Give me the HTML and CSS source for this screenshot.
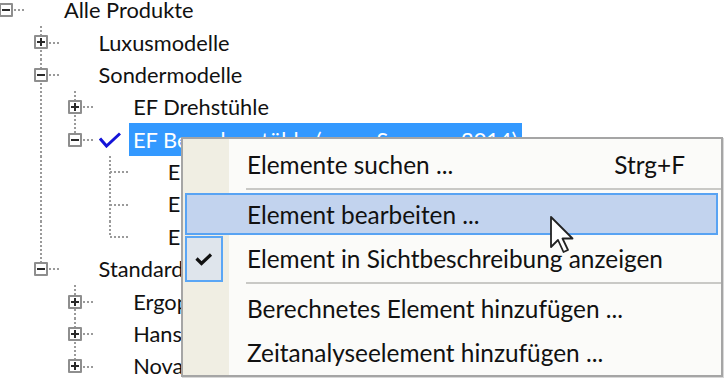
FILE: index.html
```html
<!DOCTYPE html>
<html lang="de">
<head>
<meta charset="utf-8">
<title>Produktbaum</title>
<link rel="stylesheet" href="styles.css">
</head>
<body>
<div class="tree">
  <div class="row">
    <span class="cell c-root"><span class="box minus"></span></span>
    <span class="cell icon"></span>
    <span class="label">Alle Produkte</span>
  </div>
  <div class="row">
    <span class="cell"></span>
    <span class="cell c-tee"><span class="box plus"></span></span>
    <span class="cell icon"></span>
    <span class="label">Luxusmodelle</span>
  </div>
  <div class="row">
    <span class="cell"></span>
    <span class="cell c-tee"><span class="box minus"></span></span>
    <span class="cell icon"></span>
    <span class="label">Sondermodelle</span>
  </div>
  <div class="row">
    <span class="cell"></span>
    <span class="cell g-line"></span>
    <span class="cell c-tee"><span class="box plus"></span></span>
    <span class="cell icon"></span>
    <span class="label">EF Drehstühle</span>
  </div>
  <div class="row">
    <span class="cell"></span>
    <span class="cell g-line"></span>
    <span class="cell c-elbow"><span class="box minus"></span></span>
    <span class="cell icon">
      <svg class="tick" width="22" height="16" viewBox="0 0 22 16"><path d="M1 6.5 L7.5 14 L21 1.5" fill="none" stroke="#1414d8" stroke-width="3" stroke-linejoin="miter"/></svg>
    </span>
    <span class="label selected">EF Besucherstühle (neu - Sommer 2014)</span>
  </div>
  <div class="row">
    <span class="cell"></span>
    <span class="cell g-line"></span>
    <span class="cell"></span>
    <span class="cell c-tee"></span>
    <span class="cell icon"></span>
    <span class="label">EF Besucherstuhl Classic</span>
  </div>
  <div class="row">
    <span class="cell"></span>
    <span class="cell g-line"></span>
    <span class="cell"></span>
    <span class="cell c-tee"></span>
    <span class="cell icon"></span>
    <span class="label">EF Besucherstuhl Comfort</span>
  </div>
  <div class="row">
    <span class="cell"></span>
    <span class="cell g-line"></span>
    <span class="cell"></span>
    <span class="cell c-elbow"></span>
    <span class="cell icon"></span>
    <span class="label">EF Besucherstuhl Design</span>
  </div>
  <div class="row">
    <span class="cell"></span>
    <span class="cell c-elbow"><span class="box minus"></span></span>
    <span class="cell icon"></span>
    <span class="label">Standardmodelle</span>
  </div>
  <div class="row">
    <span class="cell"></span>
    <span class="cell"></span>
    <span class="cell c-tee"><span class="box plus"></span></span>
    <span class="cell icon"></span>
    <span class="label">Ergoplus</span>
  </div>
  <div class="row">
    <span class="cell"></span>
    <span class="cell"></span>
    <span class="cell c-tee"><span class="box plus"></span></span>
    <span class="cell icon"></span>
    <span class="label">Hansa</span>
  </div>
  <div class="row">
    <span class="cell"></span>
    <span class="cell"></span>
    <span class="cell c-elbow"><span class="box plus"></span></span>
    <span class="cell icon"></span>
    <span class="label">Novalis</span>
  </div>
</div>

<div class="menu">
  <div class="item">
    <span class="text">Elemente suchen ...</span>
    <span class="shortcut">Strg+F</span>
  </div>
  <div class="sep"></div>
  <div class="item hot">
    <span class="text">Element bearbeiten ...</span>
  </div>
  <div class="item checked">
    <span class="checkbox">
      <svg width="18" height="13" viewBox="0 0 18 13"><path d="M1.5 5.5 L6.5 10.5 L16 1.5" fill="none" stroke="#111" stroke-width="3.2"/></svg>
    </span>
    <span class="text">Element in Sichtbeschreibung anzeigen</span>
  </div>
  <div class="sep"></div>
  <div class="item">
    <span class="text">Berechnetes Element hinzufügen ...</span>
  </div>
  <div class="item">
    <span class="text">Zeitanalyseelement hinzufügen ...</span>
  </div>
</div>

<svg class="cursor" width="26" height="38" viewBox="0 0 26 38">
  <path d="M1 1 L1 31 L8 24 L13.5 36 L18 34 L12.5 22.5 L22.5 22.5 Z" fill="#fff" stroke="#222" stroke-width="1.8" stroke-linejoin="round"/>
</svg>
</body>
</html>
```

FILE: styles.css
```css
html, body {
  margin: 0;
  padding: 0;
}

body {
  width: 724px;
  height: 382px;
  overflow: hidden;
  position: relative;
  background: #ffffff;
  font-family: Lato, "Open Sans", sans-serif;
  font-size: 21.8px;
  color: #111;
}

/* ---------- tree ---------- */
.tree {
  margin-top: -6.2px;
  margin-left: -11px;
}

.row {
  display: flex;
  height: 32.4px;
}

.cell {
  position: relative;
  flex: none;
  width: 34.6px;
}

.icon {
  display: flex;
  align-items: center;
}

.tick {
  margin-left: 6px;
  margin-top: 1px;
}

.g-line::before,
.c-tee::before,
.c-elbow::before {
  content: "";
  position: absolute;
  left: 16.3px;
  top: 0;
  width: 2px;
  height: 100%;
  background: repeating-linear-gradient(to bottom, #9a9a9a 0 2px, transparent 2px 4px);
}

.c-elbow::before {
  height: 50%;
}

.c-root::after,
.c-tee::after,
.c-elbow::after {
  content: "";
  position: absolute;
  left: 17px;
  right: -2px;
  top: 15.4px;
  height: 2px;
  background: repeating-linear-gradient(to right, #9a9a9a 0 2px, transparent 2px 4px);
}

.box {
  position: absolute;
  z-index: 1;
  left: 10.3px;
  top: 9.2px;
  width: 14px;
  height: 14px;
  box-sizing: border-box;
  border: 2px solid #8e8e8e;
  border-radius: 1px;
  background: #fff;
}

.box::before {
  content: "";
  position: absolute;
  left: 1px;
  top: 4px;
  width: 8px;
  height: 2px;
  background: #2a2a2a;
}

.box.plus::after {
  content: "";
  position: absolute;
  left: 4px;
  top: 1px;
  width: 2px;
  height: 8px;
  background: #2a2a2a;
}

.label {
  display: flex;
  align-items: center;
  white-space: nowrap;
  margin-left: 5.8px;
  line-height: 1;
}

.label.selected {
  margin-left: 1.6px;
  padding: 0 5px 0 4px;
  background: #3399ff;
  color: #fff;
}

/* ---------- context menu ---------- */
.menu {
  position: absolute;
  left: 181px;
  top: 137px;
  width: 542px;
  box-sizing: border-box;
  padding-top: 2px;
  border: 2px solid #a5a5a5;
  background: linear-gradient(to right, #f0eee3 0 46px, #fbfbf9 46px);
  box-shadow: 1px 1px 0 #d8d8d8;
  font-size: 24.4px;
  z-index: 5;
}

.item {
  display: flex;
  align-items: center;
  height: 42px;
  margin: 2px 3px 2px 2px;
  box-sizing: border-box;
  border: 2px solid transparent;
  padding-left: 60px;
  padding-right: 31px;
}

.item .text {
  flex: 1;
  white-space: nowrap;
}

.item.hot {
  border-color: #58a3f3;
  background: #c2d3ee;
}

.item.checked {
  position: relative;
}

.checkbox {
  position: absolute;
  left: -2px;
  top: -3px;
  width: 38px;
  height: 46px;
  box-sizing: border-box;
  border: 2px solid #5aa6f5;
  background: #dfe5ec;
  display: flex;
  align-items: center;
  justify-content: center;
}

.sep {
  height: 4px;
  margin-left: 63px;
  position: relative;
}

.sep::after {
  content: "";
  position: absolute;
  left: 0;
  right: 0;
  top: 1px;
  height: 2px;
  background: #c9c9c6;
}

.cursor {
  position: absolute;
  left: 550px;
  top: 216px;
  z-index: 10;
}
```
